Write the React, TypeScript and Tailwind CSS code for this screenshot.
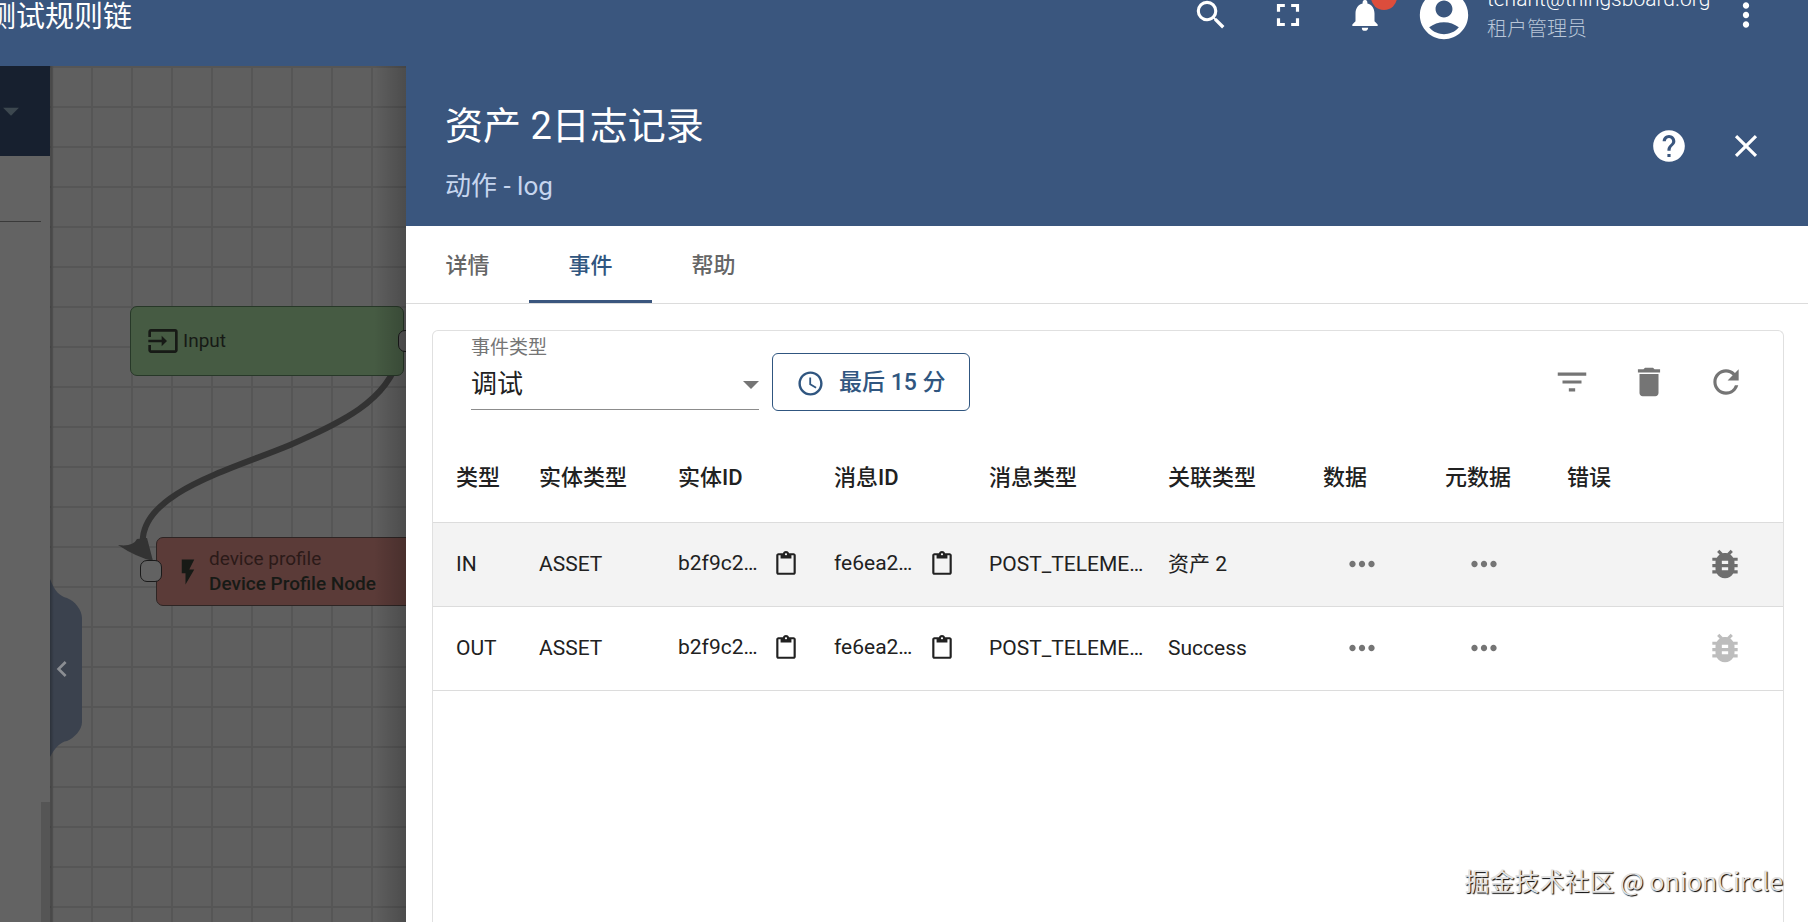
import { useState } from "react";
import type { ReactNode } from "react";
import {
  MdAccountCircle,
  MdArrowDropDown,
  MdBugReport,
  MdChevronLeft,
  MdClose,
  MdContentPaste,
  MdDelete,
  MdFilterList,
  MdFlashOn,
  MdFullscreen,
  MdHelp,
  MdInput,
  MdMoreHoriz,
  MdMoreVert,
  MdNotifications,
  MdRefresh,
  MdSchedule,
  MdSearch,
} from "react-icons/md";

type Evento = {
  tipo: string;
  entidad: string;
  entidadId: string;
  mensajeId: string;
  mensajeTipo: string;
  relacion: string;
  debug: boolean;
};

const eventos: Evento[] = [
  {
    tipo: "IN",
    entidad: "ASSET",
    entidadId: "b2f9c2…",
    mensajeId: "fe6ea2…",
    mensajeTipo: "POST_TELEME…",
    relacion: "资产 2",
    debug: true,
  },
  {
    tipo: "OUT",
    entidad: "ASSET",
    entidadId: "b2f9c2…",
    mensajeId: "fe6ea2…",
    mensajeTipo: "POST_TELEME…",
    relacion: "Success",
    debug: false,
  },
];

const columnas = ["类型", "实体类型", "实体ID", "消息ID", "消息类型", "关联类型", "数据", "元数据", "错误"];
const tabs = ["详情", "事件", "帮助"];

function IconButton({ label, children }: { label: string; children: ReactNode }) {
  return (
    <button type="button" aria-label={label} className="flex h-[77px] w-[77px] items-center justify-center">
      {children}
    </button>
  );
}

function CopyCell({ value }: { value: string }) {
  return (
    <td>
      <div className="flex items-center">
        <span className="w-[95px]">{value}</span>
        <button type="button" aria-label="复制">
          <MdContentPaste size={26} />
        </button>
      </div>
    </td>
  );
}

function TopBar() {
  return (
    <header className="-mt-9 flex h-[102px] shrink-0 items-center bg-[#3a567e] text-white">
      <h1 className="-ml-[13px] flex-1 pt-1 text-[29px] leading-9">测试规则链</h1>
      <IconButton label="搜索"><MdSearch size={38} /></IconButton>
      <IconButton label="全屏"><MdFullscreen size={38} /></IconButton>
      <div className="relative">
        <IconButton label="通知"><MdNotifications size={38} /></IconButton>
        <span className="absolute top-[7px] right-[6px] h-[26px] w-[26px] rounded-full bg-[#dc4d3c]" />
      </div>
      <MdAccountCircle size={58} className="ml-3" />
      <div className="ml-[14px] w-[220px] font-light whitespace-nowrap">
        <p className="text-[21px] leading-7">tenant@thingsboard.org</p>
        <p className="text-[20px] leading-8 text-[#b9c6d8]">租户管理员</p>
      </div>
      <IconButton label="更多"><MdMoreVert size={38} /></IconButton>
      <div className="w-6" />
    </header>
  );
}

function Sidebar() {
  return (
    <aside className="flex w-[50px] shrink-0 flex-col bg-[#636363]">
      <div className="flex h-[90px] items-center bg-[#17202f] text-[#3c474f]">
        <MdArrowDropDown size={38} className="-ml-2" />
      </div>
      <div className="mr-[9px] h-[66px] border-b border-[#3a3a3a]" />
      <div className="mt-auto h-[120px] w-[9px] self-end bg-[#555555]" />
    </aside>
  );
}

function Canvas() {
  return (
    <section className="relative w-[356px] shrink-0 overflow-hidden bg-[#5f5f5f] bg-[linear-gradient(to_right,#565656_2px,transparent_2px),linear-gradient(to_bottom,#565656_2px,transparent_2px)] bg-[size:40px_40px] bg-[position:1px_0px] text-[19px] text-[#171a16]">
      <svg className="absolute top-0 left-0" width="356" height="856">
        <path d="M0 513C5 526 10 530 17 532C25 535 32 544 32 552V656C32 664 24 672 17 675C10 676 5 682 0 691Z" fill="#3b424e" />
        <path d="M349 290C338 335 290 357 240 379C180 404 87 428 93 480" fill="none" stroke="#333333" strokeWidth="6" />
        <path d="M68 479Q83 481 87 473L97 472L103 495Q86 491 68 479Z" fill="#333333" />
      </svg>
      <button type="button" aria-label="收起" className="absolute top-[587px] left-0 text-[#8b8e93]">
        <MdChevronLeft size={32} className="-ml-1" />
      </button>
      <div className="absolute top-[240px] left-[80px] flex h-[70px] w-[274px] items-center gap-1 rounded-[7px] border border-[#273828] bg-[#465b43] pl-4">
        <MdInput size={32} />
        <span>Input</span>
      </div>
      <div className="absolute top-[264px] left-[348px] h-[22px] w-[22px] rounded-[7px] border border-[#1a1a1a] bg-[#5a5a5a]" />
      <div className="absolute top-[471px] left-[106px] flex h-[69px] w-[274px] items-center gap-1.5 rounded-[7px] border border-[#2e2524] bg-[#5b3b38] pl-4">
        <MdFlashOn size={30} />
        <div className="-mt-0.5 leading-[25px]">
          <p className="text-[#2b1a18]">device profile</p>
          <p className="font-medium">Device Profile Node</p>
        </div>
      </div>
      <div className="absolute top-[494px] left-[90px] h-[22px] w-[22px] rounded-[7px] border border-[#1a1a1a] bg-[#626262]" />
      <div className="absolute inset-y-0 left-0 w-1 bg-linear-to-r from-black/25 to-transparent" />
      <div className="absolute inset-y-0 right-0 w-8 bg-linear-to-l from-black/20 to-transparent" />
    </section>
  );
}

export default function App() {
  const [tab, setTab] = useState("事件");

  return (
    <div className="relative flex h-screen flex-col overflow-hidden bg-white font-['Roboto','Noto_Sans_CJK_SC',sans-serif] text-[#212121]">
      <TopBar />
      <main className="flex min-h-0 flex-1">
        <Sidebar />
        <Canvas />
        <section className="flex min-w-0 flex-1 flex-col bg-white">
          <div className="flex h-[160px] shrink-0 items-center bg-[#3a567e] pr-6 pl-[39px] text-white">
            <div className="flex-1 pt-4">
              <h2 className="text-[38px] leading-[60px]">资产 2日志记录</h2>
              <p className="pt-1 text-[26px] leading-[52px] text-[#c6d5ee]">动作 - log</p>
            </div>
            <IconButton label="帮助"><MdHelp size={38} /></IconButton>
            <IconButton label="关闭"><MdClose size={38} /></IconButton>
          </div>

          <nav className="flex h-[78px] shrink-0 border-b border-[#dcdcdc]">
            {tabs.map((t) => (
              <button
                key={t}
                type="button"
                onClick={() => setTab(t)}
                className={`w-[123px] border-b-3 pt-1 text-[22px] font-medium ${
                  t === tab ? "border-[#3a567e] text-[#305680]" : "border-transparent text-[#666666]"
                }`}
              >
                {t}
              </button>
            ))}
          </nav>

          <div className="mx-[26px] mt-[26px] mr-6 flex-1 rounded-t-md border border-b-0 border-[#e0e0e0]">
            <div className="flex h-[102px] items-center pr-[19px] pl-[38px]">
              <div className="mb-6 w-[288px] border-b border-[#8c8c8c]">
                <label htmlFor="tipo-evento" className="block pt-0.5 text-[19px] leading-[30px] text-[#757575]">
                  事件类型
                </label>
                <div className="relative">
                  <select id="tipo-evento" className="block h-[46px] w-full appearance-none bg-transparent pb-1 text-[26px] leading-9">
                    <option>调试</option>
                  </select>
                  <svg className="pointer-events-none absolute top-[18px] right-0" width="16" height="8">
                    <path d="M0 0h16l-8 8z" fill="#757575" />
                  </svg>
                </div>
              </div>
              <button
                type="button"
                className="ml-[13px] flex h-[58px] items-center gap-[14px] rounded-md border border-[#305680] px-[23px] pt-0.5 text-[23px] font-medium whitespace-nowrap text-[#305680]"
              >
                <MdSchedule size={29} />
                最后 15 分
              </button>
              <div className="ml-auto flex text-[#757575]">
                <IconButton label="过滤"><MdFilterList size={38} /></IconButton>
                <IconButton label="删除"><MdDelete size={38} /></IconButton>
                <IconButton label="刷新"><MdRefresh size={38} /></IconButton>
              </div>
            </div>

            <table className="w-full table-fixed text-left text-[21px] whitespace-nowrap">
              <colgroup>
                <col className="w-[106px]" />
                <col className="w-[139px]" />
                <col className="w-[156px]" />
                <col className="w-[155px]" />
                <col className="w-[179px]" />
                <col className="w-[155px]" />
                <col className="w-[122px]" />
                <col className="w-[122px]" />
                <col />
                <col className="w-[97px]" />
              </colgroup>
              <thead>
                <tr className="h-[89px] border-b border-[#dcdcdc] text-[22px]">
                  {columnas.map((c) => (
                    <th key={c} className="font-medium first:pl-[23px]">{c}</th>
                  ))}
                  <th />
                </tr>
              </thead>
              <tbody>
                {eventos.map((e) => (
                  <tr key={e.tipo} className="h-[84px] border-b border-[#dcdcdc] first:bg-[#f3f3f3]">
                    <td className="pt-0.5 pl-[23px]">{e.tipo}</td>
                    <td className="pt-0.5">{e.entidad}</td>
                    <CopyCell value={e.entidadId} />
                    <CopyCell value={e.mensajeId} />
                    <td className="pt-0.5">{e.mensajeTipo}</td>
                    <td className="pt-0.5">{e.relacion}</td>
                    <td>
                      <button type="button" aria-label="数据" className="ml-5 block text-[#757575]"><MdMoreHoriz size={38} /></button>
                    </td>
                    <td>
                      <button type="button" aria-label="元数据" className="ml-5 block text-[#757575]"><MdMoreHoriz size={38} /></button>
                    </td>
                    <td />
                    <td>
                      <button
                        type="button"
                        aria-label="调试"
                        className={`ml-5 block ${e.debug ? "text-[#6e6e6e]" : "text-[#bdbdbd]"}`}
                      >
                        <MdBugReport size={38} />
                      </button>
                    </td>
                  </tr>
                ))}
              </tbody>
            </table>
          </div>
        </section>
      </main>
      <p className="absolute right-[25px] bottom-6 font-['Noto_Sans_CJK_SC',sans-serif] text-[25px] leading-9 text-[#e2e2e2] [text-shadow:1px_1px_1px_#000]">
        掘金技术社区 @ onionCircle
      </p>
    </div>
  );
}
